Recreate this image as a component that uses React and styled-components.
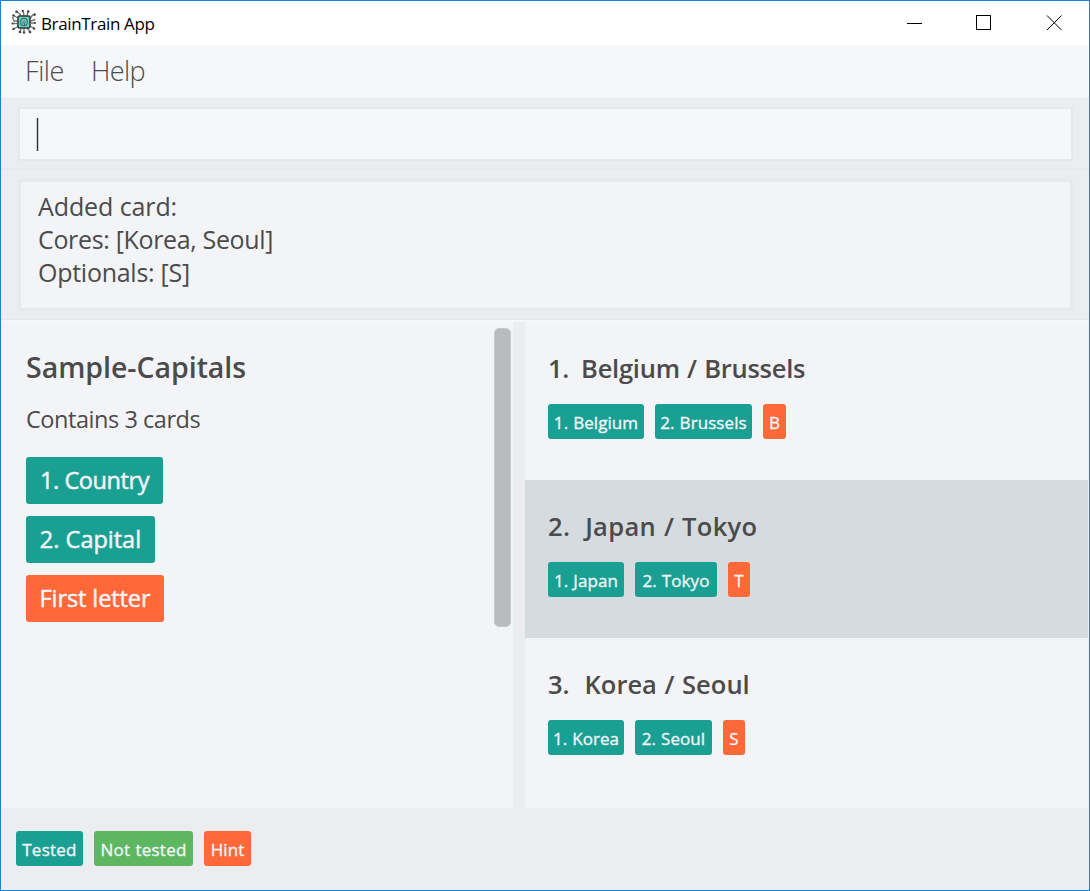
import React from "react";
import styled, { createGlobalStyle, css } from "styled-components";

const GlobalStyle = createGlobalStyle`
  *, *::before, *::after { box-sizing: border-box; }
  body {
    margin: 0;
    font-family: "Open Sans", "Noto Sans", sans-serif;
    color: #4b4b4b;
  }
`;

const Window = styled.div`
  display: flex;
  flex-direction: column;
  width: 1090px;
  height: 891px;
  border: 1px solid #1883d7;
  background: #ecedf1;
  overflow: hidden;
`;

const TitleBar = styled.header`
  display: flex;
  align-items: center;
  flex: 0 0 44px;
  padding-left: 10px;
  background: #fff;
`;

const AppTitle = styled.h1`
  flex: 1;
  margin: 0 0 0 5px;
  font-size: 17px;
  font-weight: 400;
  line-height: 42px;
  padding-top: 2px;
  letter-spacing: -0.36px;
  color: #000;
`;

const WindowButton = styled.button`
  display: flex;
  align-items: center;
  justify-content: center;
  width: 70px;
  height: 44px;
  padding: 0;
  border: 0;
  background: none;
`;

const MenuBar = styled.nav`
  display: flex;
  flex: 0 0 53px;
  padding-left: 24px;
  background: #f6f7fb;
`;

const MenuItem = styled.span`
  width: 66px;
  font-size: 27px;
  font-weight: 300;
  line-height: 51px;
  letter-spacing: ${(p) => p.$tracking}px;
`;

const CommandPane = styled.section`
  flex: 0 0 70px;
  padding: 8px 16px 0 17px;
  border-top: 1px solid #e6e7eb;
`;

const CommandField = styled.div`
  height: 54px;
  padding: 9px 0 0 16px;
  border: 2px solid #e7e8ec;
  background: #f6f7fb;
`;

const Caret = styled.div`
  width: 3px;
  height: 33px;
  border: solid #c9cace;
  border-width: 0 1px;
  background: #333;
`;

const ResultPane = styled.section`
  flex: 0 0 152px;
  padding: 9px 16px 0 17px;
  border-top: 2px solid #e8e9ed;
  border-bottom: 1px solid #e6e7eb;
`;

const ResultBox = styled.div`
  height: 132px;
  padding: 8px 0 0 17px;
  border: 3px solid #e8e9ed;
  background: #f3f4f8;
`;

const ResultLine = styled.p`
  margin: 0;
  font-size: 25px;
  line-height: 33px;
  letter-spacing: ${(p) => p.$tracking}px;
  white-space: nowrap;
`;

const Panels = styled.main`
  display: flex;
  flex: 0 0 488px;
  gap: 12px;
  padding-right: 1px;
  border-top: 2px solid #f5f6fa;
`;

const DeckPanel = styled.section`
  display: flex;
  justify-content: space-between;
  width: 512px;
  padding: 6px 2px 0 25px;
  background: #f3f4f8;
`;

const DeckTitle = styled.h2`
  margin: 19px 0 0;
  font-size: 28.5px;
  font-weight: 600;
  line-height: 40px;
  letter-spacing: -0.03px;
`;

const DeckCount = styled.p`
  margin: 15px 0 21px;
  font-size: 23.5px;
  line-height: 34px;
  letter-spacing: -0.45px;
`;

const DeckTags = styled.div`
  display: flex;
  flex-direction: column;
  gap: 12px;
`;

const ScrollThumb = styled.div`
  width: 17px;
  height: 299px;
  border: 1px solid #c9cace;
  border-radius: 5px;
  background: #babbbf;
`;

const CardList = styled.section`
  flex: 1;
  background: #f3f4f8;
`;

const Card = styled.article`
  height: 158px;
  padding: 26px 0 0 23px;
  ${(p) => p.$selected && css`background: #d6dbdf;`}
`;

const CardTitle = styled.h3`
  display: flex;
  gap: ${(p) => p.$gap}px;
  margin: 0 0 16px;
  font-size: 25.5px;
  font-weight: 600;
  line-height: 40px;
  letter-spacing: ${(p) => p.$tracking}px;
  word-spacing: 1px;
  white-space: pre;
`;

const TagRow = styled.div`
  display: flex;
  gap: 11px;
`;

const tones = { tested: "#1aa093", untested: "#5cb760", hint: "#ff6838" };

const Tag = styled.span`
  display: flex;
  justify-content: center;
  width: ${(p) => p.$width}px;
  height: ${(p) => (p.$large ? 47 : 35)}px;
  border-radius: 3px;
  background: ${(p) => tones[p.$tone]};
  color: #f3f4f8;
  font-size: ${(p) => (p.$large ? 23.5 : 17)}px;
  line-height: ${(p) => (p.$large ? 47 : 37)}px;
  letter-spacing: ${(p) => p.$tracking ?? 0.07}px;
  word-spacing: ${(p) => (p.$large ? 0 : 0.5)}px;
  -webkit-text-stroke: ${(p) => (p.$large ? 0.5 : 0.35)}px #f3f4f8;
  white-space: nowrap;
`;

const Footer = styled.footer`
  display: flex;
  gap: 11px;
  padding: 23px 0 0 15px;
`;

const Logo = () => (
  <svg width="25" height="26" viewBox="0 0 25 26" fill="none">
    <g stroke="#777" strokeWidth="1.4">
      <path d="M9.500 6L9 4 5.500 1.500M13 6L12 .5M16 6l1-4.500M19.500 8l2-3h2.500M19.500 11l5-1.500M19.500 13h5M19 16l4 2.500M16 18l3 3.500M13 18v4.500M10 18l-1 4M7 16.500L2.500 19M7 13.500H1M7 11H3L1.500 7M7 8L2.500 5.500" />
    </g>
    <g fill="#444">
      <circle cx="5.500" cy="1.700" r="1.300" /><circle cx="11.700" cy="1" r="1.100" />
      <circle cx="17.200" cy="1.500" r="1.300" /><circle cx="23.700" cy="4.500" r="1.300" />
      <circle cx="24" cy="13" r="1" /><circle cx="23" cy="18.500" r="1.200" />
      <circle cx="19" cy="22" r="1.300" /><circle cx="13" cy="22.500" r="1.200" />
      <circle cx="9" cy="22" r="1.300" /><circle cx="2.500" cy="19" r="1.200" />
      <circle cx="1.500" cy="13.500" r="1" /><circle cx="2.500" cy="5.500" r="1.200" />
    </g>
    <rect x="7" y="6" width="12" height="12" rx="1.500" fill="#64d4c4" stroke="#333" strokeWidth="1.500" />
    <ellipse cx="13" cy="12" rx="3.300" ry="3.600" fill="#8ad8cd" stroke="#37706b" strokeWidth="1.200" />
    <path d="M12 14v-2.500l1.500-1 1 1.500-1 1V15" stroke="#37706b" />
  </svg>
);

const cards = [
  {
    title: "Belgium / Brussels", number: "1.", gap: 12, tracking: -0.25,
    tags: [["1. Belgium", 96, "tested"], ["2. Brussels", 97, "tested"], ["B", 23, "hint"]],
  },
  {
    title: "Japan / Tokyo", number: "2.", gap: 15, tracking: 0.3, selected: true,
    tags: [["1. Japan", 76, "tested"], ["2. Tokyo", 82, "tested"], ["T", 22, "hint"]],
  },
  {
    title: "Korea / Seoul", number: "3.", gap: 15, tracking: 0,
    tags: [["1. Korea", 76, "tested"], ["2. Seoul", 77, "tested"], ["S", 22, "hint"]],
  },
];

export default function App() {
  return (
    <>
      <GlobalStyle />
      <Window>
        <TitleBar>
          <Logo />
          <AppTitle>BrainTrain App</AppTitle>
          <WindowButton aria-label="Minimize">
            <svg width="16" height="16" shapeRendering="crispEdges"><path d="M1 8.500h15" stroke="#000" /></svg>
          </WindowButton>
          <WindowButton aria-label="Maximize">
            <svg width="16" height="16" fill="none" shapeRendering="crispEdges"><path d="M.5.5h14v14H.5z" stroke="#000" /></svg>
          </WindowButton>
          <WindowButton aria-label="Close">
            <svg width="16" height="16"><path d="M1 .5l14.500 14.500M15.500.5L1 15" stroke="#000" strokeWidth="1" /></svg>
          </WindowButton>
        </TitleBar>
        <MenuBar>
          <MenuItem $tracking={-0.4}>File</MenuItem>
          <MenuItem $tracking={-0.6}>Help</MenuItem>
        </MenuBar>
        <CommandPane>
          <CommandField><Caret /></CommandField>
        </CommandPane>
        <ResultPane>
          <ResultBox>
            <ResultLine $tracking={-0.1}>Added card:</ResultLine>
            <ResultLine $tracking={-0.34}>Cores: [Korea, Seoul]</ResultLine>
            <ResultLine $tracking={-0.27}>Optionals: [S]</ResultLine>
          </ResultBox>
        </ResultPane>
        <Panels>
          <DeckPanel>
            <div>
              <DeckTitle>Sample-Capitals</DeckTitle>
              <DeckCount>Contains 3 cards</DeckCount>
              <DeckTags>
                <Tag $large $tone="tested" $width={137} $tracking={-0.4}>1. Country</Tag>
                <Tag $large $tone="tested" $width={129} $tracking={0}>2. Capital</Tag>
                <Tag $large $tone="hint" $width={138} $tracking={-0.1}>First letter</Tag>
              </DeckTags>
            </div>
            <ScrollThumb />
          </DeckPanel>
          <CardList>
            {cards.map((card) => (
              <Card key={card.number} $selected={card.selected}>
                <CardTitle $gap={card.gap} $tracking={card.tracking}>
                  <span>{card.number}</span>
                  <span>{card.title}</span>
                </CardTitle>
                <TagRow>
                  {card.tags.map(([label, width, tone]) => (
                    <Tag key={label} $tone={tone} $width={width}>{label}</Tag>
                  ))}
                </TagRow>
              </Card>
            ))}
          </CardList>
        </Panels>
        <Footer>
          <Tag $tone="tested" $width={67} $tracking={0.25}>Tested</Tag>
          <Tag $tone="untested" $width={99} $tracking={0.25}>Not tested</Tag>
          <Tag $tone="hint" $width={47}>Hint</Tag>
        </Footer>
      </Window>
    </>
  );
}
